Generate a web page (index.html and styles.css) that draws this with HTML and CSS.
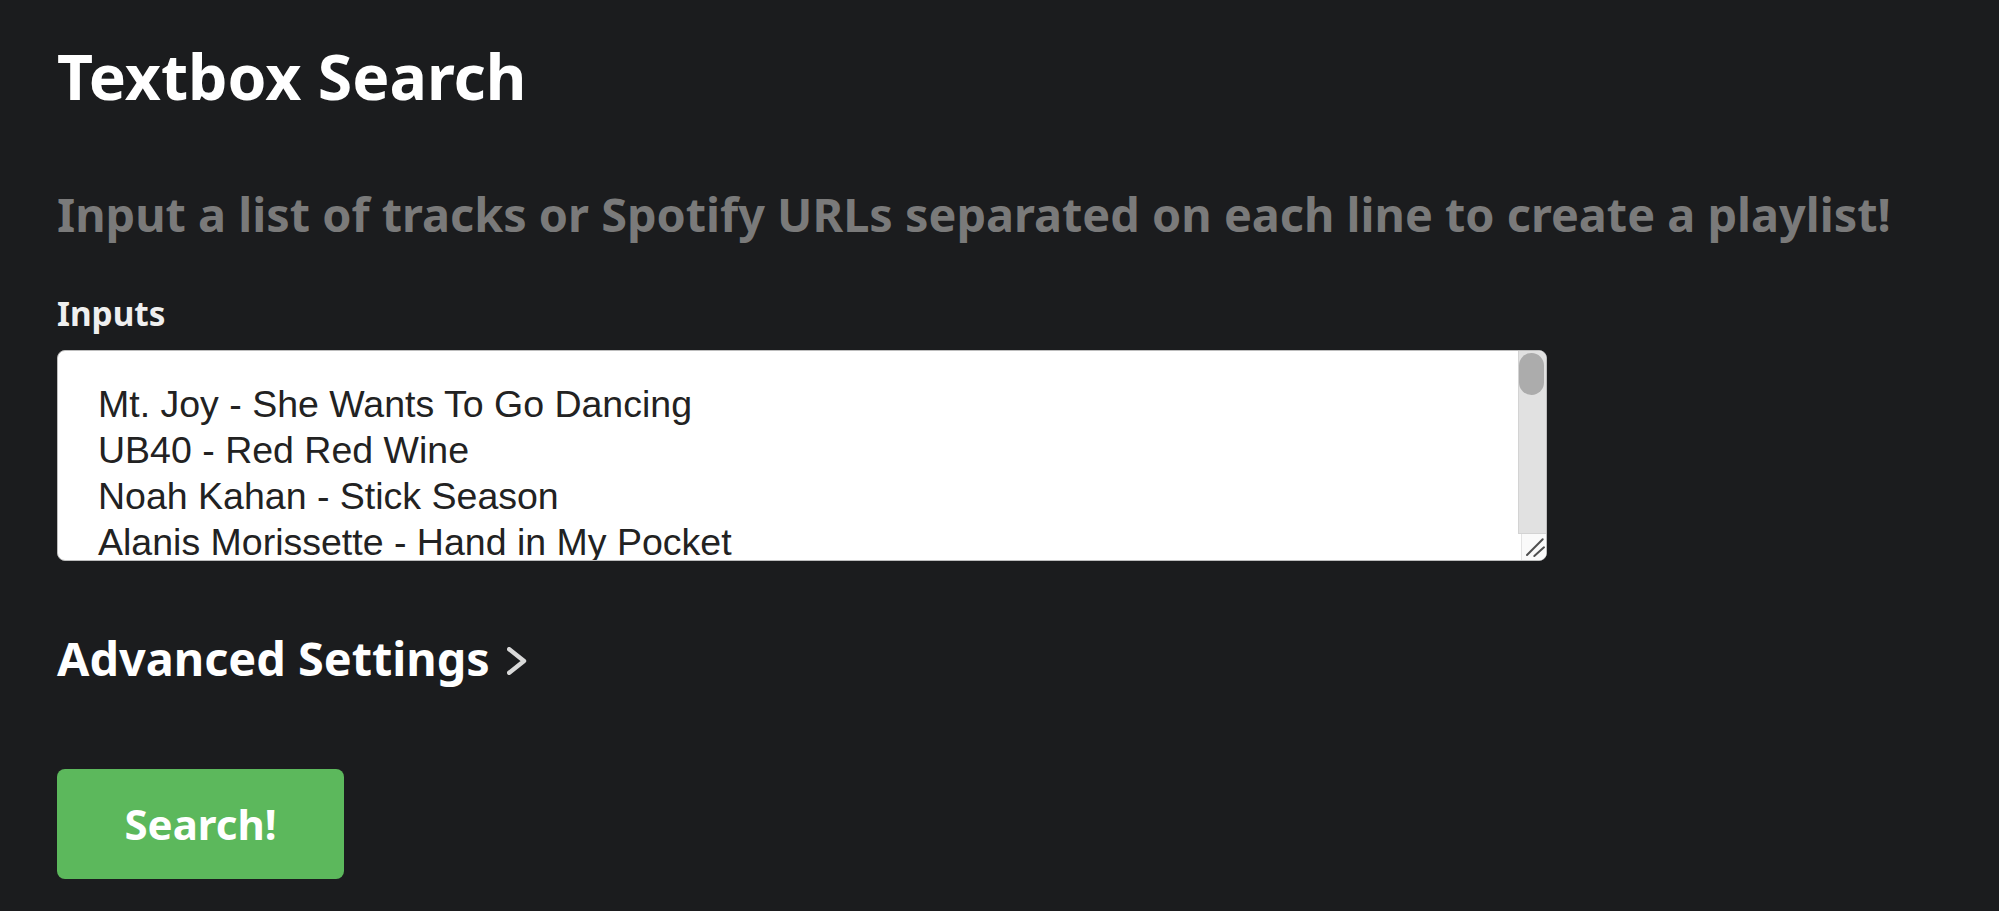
FILE: index.html
```html
<!DOCTYPE html>
<html lang="en">
<head>
<meta charset="utf-8">
<title>Textbox Search</title>
<link rel="stylesheet" href="styles.css">
</head>
<body>
<main class="page">
  <h1 class="title">Textbox Search</h1>
  <p class="subtitle">Input a list of tracks or Spotify URLs separated on each line to create a playlist!</p>
  <label class="field-label" for="inputs">Inputs</label>
  <div class="field">
    <textarea id="inputs" class="tracks" spellcheck="false">Mt. Joy - She Wants To Go Dancing
UB40 - Red Red Wine
Noah Kahan - Stick Season
Alanis Morissette - Hand in My Pocket</textarea>
    <div class="scrollbar" aria-hidden="true">
      <div class="track"><div class="thumb"></div></div>
      <div class="resizer">
        <svg viewBox="0 0 24 26" width="24" height="26"><line x1="5" y1="21" x2="20.7" y2="5.3"/><line x1="12.3" y1="22" x2="22" y2="13.3"/></svg>
      </div>
    </div>
  </div>
  <button class="advanced" type="button">Advanced Settings<svg class="chevron" viewBox="0 0 20 28" width="20" height="28" aria-hidden="true"><polyline points="2.2,2.2 17,14 2.2,25.8" fill="none" stroke="currentColor" stroke-width="4.4" stroke-linecap="round" stroke-linejoin="round"/></svg></button>
  <button class="search" type="submit">Search!</button>
</main>
</body>
</html>
```

FILE: styles.css
```css
html, body {
  margin: 0;
  padding: 0;
  background: #1b1c1e;
}

.page {
  display: flex;
  flex-direction: column;
  align-items: flex-start;
  padding-left: 57px;
  font-family: "Noto Sans", "Open Sans", sans-serif;
  font-weight: 700;
}

.title {
  margin: 44.5px 0 0;
  font-size: 62.5px;
  line-height: 62.5px;
  font-weight: 700;
  color: #ffffff;
}

.subtitle {
  margin: 84.4px 0 0;
  font-size: 46.8px;
  line-height: 46.8px;
  color: #7a7a7a;
}

.field-label {
  margin-top: 58.5px;
  font-size: 33.3px;
  line-height: 33px;
  color: #efefef;
}

.field {
  position: relative;
  margin-top: 20px;
  width: 1490px;
  height: 211px;
}

.tracks {
  display: block;
  box-sizing: border-box;
  width: 100%;
  height: 100%;
  margin: 0;
  padding: 30px 40px;
  border: 1px solid #bdbdbd;
  border-radius: 8px;
  background: #ffffff;
  color: #222222;
  font-family: "Liberation Sans", Arial, sans-serif;
  font-weight: 400;
  font-size: 37.5px;
  line-height: 46px;
  overflow: hidden;
  resize: none;
  outline: none;
}

.scrollbar {
  position: absolute;
  top: 1px;
  right: 1px;
  bottom: 1px;
  width: 28px;
  display: flex;
  flex-direction: column;
  border-radius: 0 7px 7px 0;
  overflow: hidden;
  pointer-events: none;
}

.track {
  flex: 1;
  padding: 2px 2px 0 0;
  background: #e1e1e1;
  border-left: 1px solid #d3d3d3;
  border-bottom: 1px solid #d3d3d3;
}

.thumb {
  width: 25px;
  height: 42px;
  border-radius: 12.5px;
  background: #acacac;
}

.resizer {
  display: flex;
  justify-content: flex-end;
  height: 26px;
  background: #ffffff;
}

.resizer svg {
  display: block;
  box-sizing: border-box;
  width: 25px;
  height: 26px;
  border-left: 1px solid #e3e3e3;
  background: #fafafa;
}

.resizer line {
  stroke: #4f4f4f;
  stroke-width: 2;
  stroke-linecap: round;
}

.advanced {
  display: flex;
  align-items: center;
  gap: 17px;
  margin-top: 74.7px;
  padding: 0;
  border: 0;
  background: none;
  font-family: inherit;
  font-weight: 700;
  font-size: 46.8px;
  line-height: 46.5px;
  color: #ffffff;
}

.chevron {
  margin-top: 4px;
  color: #d9d9d9;
}

.search {
  margin-top: 86.8px;
  width: 287px;
  height: 110px;
  padding: 0;
  border: 0;
  border-radius: 8px;
  background: #5cb85c;
  color: #ffffff;
  font-family: inherit;
  font-weight: 700;
  font-size: 42px;
}
```
